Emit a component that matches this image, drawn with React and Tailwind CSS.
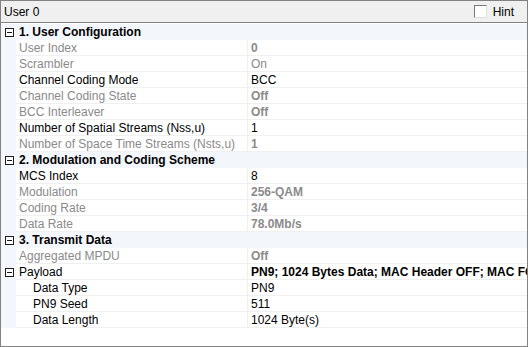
const rows = [
  { cat: "1. User Configuration" },
  { label: "User Index", value: "0", dis: true, bold: true },
  { label: "Scrambler", value: "On", dis: true },
  { label: "Channel Coding Mode", value: "BCC" },
  { label: "Channel Coding State", value: "Off", dis: true, bold: true },
  { label: "BCC Interleaver", value: "Off", dis: true, bold: true },
  { label: "Number of Spatial Streams (Nss,u)", value: "1" },
  { label: "Number of Space Time Streams (Nsts,u)", value: "1", dis: true, bold: true },
  { cat: "2. Modulation and Coding Scheme" },
  { label: "MCS Index", value: "8" },
  { label: "Modulation", value: "256-QAM", dis: true, bold: true },
  { label: "Coding Rate", value: "3/4", dis: true, bold: true },
  { label: "Data Rate", value: "78.0Mb/s", dis: true, bold: true },
  { cat: "3. Transmit Data" },
  { label: "Aggregated MPDU", value: "Off", dis: true, bold: true },
  { label: "Payload", value: "PN9; 1024 Bytes Data; MAC Header OFF; MAC FCS OFF", bold: true, expand: true },
  { label: "Data Type", value: "PN9", sub: true },
  { label: "PN9 Seed", value: "511", sub: true },
  { label: "Data Length", value: "1024 Byte(s)", sub: true },
];

function Minus() {
  return (
    <svg width="9" height="9" viewBox="0 0 9 9" className="block">
      <rect x="0.5" y="0.5" width="8" height="8" fill="white" stroke="#1e1e1e" />
      <line x1="2" y1="4.5" x2="7" y2="4.5" stroke="#1e1e1e" />
    </svg>
  );
}

export default function App() {
  return (
    <div
      className="w-[528px] h-[347px] border border-[#828282] bg-white flex flex-col text-[12px] overflow-hidden"
      style={{ fontFamily: "'Liberation Sans', Arial, sans-serif" }}
    >
      <div className="h-[22px] shrink-0 bg-[#f0f0f0] border-b border-[#828282] flex items-center justify-between pl-[3px] pr-[13px]">
        <span className="text-black">User 0</span>
        <div className="flex items-center gap-[6px]">
          <span className="w-[13px] h-[13px] bg-white border border-[#7a7a7a] border-r-[#e0e0e0] border-b-[#e0e0e0]" />
          <span className="text-black">Hint</span>
        </div>
      </div>
      <div className="pt-[1px] flex flex-col">
        {rows.map((r, i) =>
          r.cat ? (
            <div key={i} className="h-[16px] flex items-center bg-[#f3f6fb]">
              <div className="w-[15px] flex justify-center pl-[1px]">
                <Minus />
              </div>
              <span className="pl-[3px] font-bold text-black whitespace-nowrap">{r.cat}</span>
            </div>
          ) : (
            <div key={i} className="h-[16px] flex bg-[#f3f6fb]">
              <div className="w-[15px] shrink-0 flex items-center justify-center pl-[1px]">
                {r.expand && <Minus />}
              </div>
              <div className="flex flex-1 bg-white border-b border-[#f0f0f0] min-w-0">
                <div
                  className={`w-[232px] shrink-0 flex items-center border-r border-[#f0f0f0] whitespace-nowrap overflow-hidden ${r.sub ? "pl-[17px]" : "pl-[3px]"} ${r.dis ? "text-[#8a8a8a]" : "text-black"}`}
                >
                  {r.label}
                </div>
                <div
                  className={`flex-1 flex items-center pl-[3px] whitespace-nowrap overflow-hidden ${r.dis ? "text-[#8a8a8a]" : "text-black"} ${r.bold ? "font-bold" : ""}`}
                >
                  {r.value}
                </div>
              </div>
            </div>
          )
        )}
      </div>
    </div>
  );
}
